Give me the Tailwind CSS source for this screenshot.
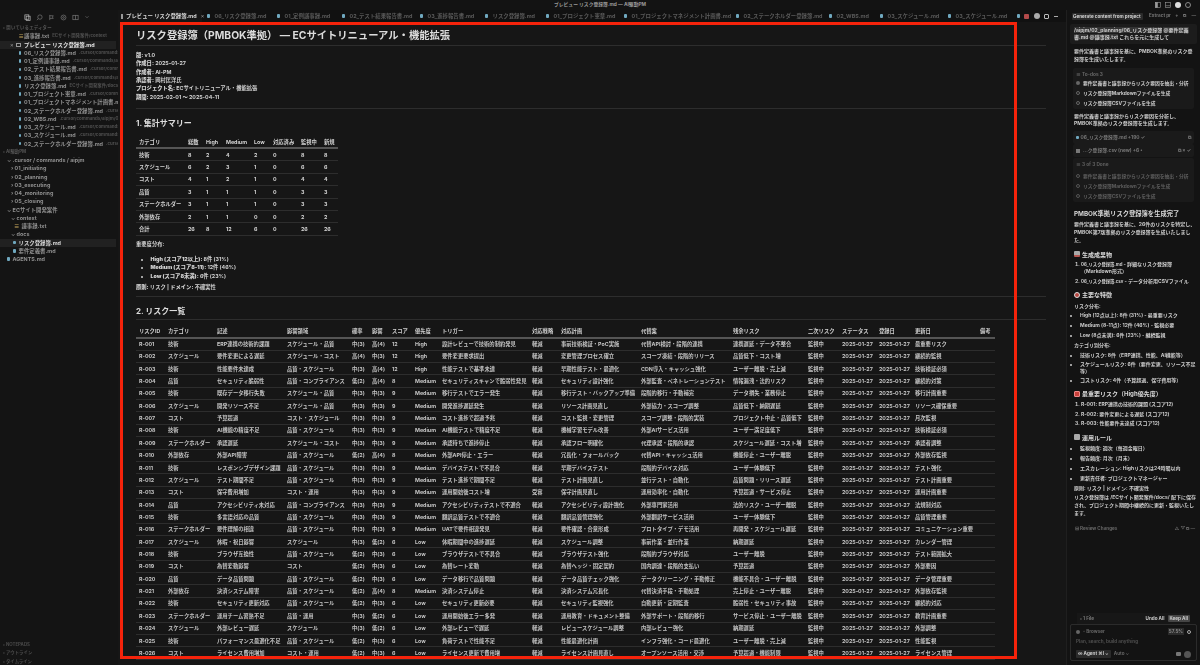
<!DOCTYPE html>
<html lang="ja"><head><meta charset="utf-8"><title>プレビュー リスク登録簿.md — AI駆動PM</title>
<script src="https://cdn.jsdelivr.net/npm/@tailwindcss/browser@4"></script></head>
<body class="m-0 bg-[#141414]">
<div class="relative w-[1200px] h-[665px] overflow-hidden bg-[#141414] text-[#d2d2d2] font-['Inter','Noto_Sans_CJK_JP',sans-serif] text-[5.3px] font-bold">
  <div class="blur-[0.25px]">
  <!-- title bar -->
  <div class="relative h-[10px] flex items-center justify-center text-[4.8px] text-[#9a9a9a] bg-[#131313]">プレビュー リスク登録簿.md — AI駆動PM
  </div>
  <div class="absolute right-[2px] top-[1px] flex items-center gap-[4px]">
    <svg width="6" height="6" viewBox="0 0 6 6" fill="none" stroke="#999" stroke-width=".6"><rect x=".5" y=".5" width="5" height="5"/><rect x=".5" y=".5" width="2" height="5" fill="#999"/></svg>
    <svg width="6" height="6" viewBox="0 0 6 6" fill="none" stroke="#999" stroke-width=".6"><rect x=".5" y=".5" width="5" height="5"/><path d="M.5 3.7h5"/></svg>
    <span class="w-[6px] h-[6px] rounded-full bg-[#ddd]"></span>
    <span class="w-[6px] h-[6px] rounded-full border border-[#888]"></span>
    <span class="w-[3px] h-[8px]"></span>
  </div>
  <div class="flex h-[655px]">
    <!-- sidebar -->
    <aside class="w-[118px] shrink-0 flex flex-col text-[5.4px] text-[#8f8f8f] leading-[8.25px] bg-[#141414] whitespace-nowrap">
      <div class="h-[14px] flex items-center gap-[5px] pl-[24px] text-[#888]">
        <svg width="7" height="7" viewBox="0 0 8 8" fill="none" stroke="#bbb" stroke-width=".8"><rect x="1" y="1" width="4.5" height="5"/><rect x="2.5" y="2.5" width="4.5" height="5"/></svg>
        <svg width="7" height="7" viewBox="0 0 8 8" fill="none" stroke="#777" stroke-width=".8"><circle cx="4.5" cy="3.5" r="2.5"/><path d="M2.7 5.3 1 7"/></svg>
        <svg width="7" height="7" viewBox="0 0 8 8" fill="none" stroke="#777" stroke-width=".8"><path d="M2 1v6M2 2h4l-1 1.5L6 5H2"/></svg>
        <svg width="7" height="7" viewBox="0 0 8 8" fill="none" stroke="#777" stroke-width=".8"><circle cx="4" cy="4" r="2.8"/><circle cx="4" cy="4" r="1"/></svg>
        <svg width="7" height="7" viewBox="0 0 8 8" fill="none" stroke="#777" stroke-width=".8"><rect x="1" y="1.5" width="6" height="5"/><path d="M4 1.5v5"/></svg>
        <svg width="6" height="6" viewBox="0 0 8 8" fill="none" stroke="#777" stroke-width=".8"><path d="m2 3 2 2 2-2"/></svg>
      </div>
      <div class="h-[8.25px] pl-[3px] text-[4.4px] text-[#555] tracking-[.2px]">› 開いているエディター</div>
      <div class="h-[8.25px] pl-[18.5px] flex items-center"><span class="text-[#c7a85c] w-[5.5px]">≡</span><span>議事録.txt</span><span class="text-[#505050] text-[4.4px] ml-[3px]">ECサイト開発案件/context</span></div>
      <div class="h-[8.25px] pl-[10px] mr-[2px] flex items-center bg-white/6 text-[#e4e4e4] font-bold"><span class="w-[6px] text-[#aaa] font-normal">×</span><span class="w-[5px] h-[4px] border border-[#999] mr-[3px]"></span><span>プレビュー リスク登録簿.md</span></div>
      <div class="h-[8.25px] pl-[18.5px] flex items-center"><span class="w-[2.5px] h-[3.5px] rounded-[1px] bg-[#6fa8bf] mr-[3px] shrink-0"></span><span>06_リスク登録簿.md</span><span class="text-[#505050] text-[4.4px] ml-[3px]">.cursor/commands/...</span></div>
      <div class="h-[8.25px] pl-[18.5px] flex items-center"><span class="w-[2.5px] h-[3.5px] rounded-[1px] bg-[#6fa8bf] mr-[3px] shrink-0"></span><span>01_定例議事録.md</span><span class="text-[#505050] text-[4.4px] ml-[3px]">.cursor/commands/aipjr...</span></div>
      <div class="h-[8.25px] pl-[18.5px] flex items-center"><span class="w-[2.5px] h-[3.5px] rounded-[1px] bg-[#6fa8bf] mr-[3px] shrink-0"></span><span>02_テスト結果報告書.md</span><span class="text-[#505050] text-[4.4px] ml-[3px]">.cursor/comm...</span></div>
      <div class="h-[8.25px] pl-[18.5px] flex items-center"><span class="w-[2.5px] h-[3.5px] rounded-[1px] bg-[#6fa8bf] mr-[3px] shrink-0"></span><span>03_進捗報告書.md</span><span class="text-[#505050] text-[4.4px] ml-[3px]">.cursor/commands/aipj...</span></div>
      <div class="h-[8.25px] pl-[18.5px] flex items-center"><span class="w-[2.5px] h-[3.5px] rounded-[1px] bg-[#6fa8bf] mr-[3px] shrink-0"></span><span>リスク登録簿.md</span><span class="text-[#505050] text-[4.4px] ml-[3px]">ECサイト開発案件/docs</span></div>
      <div class="h-[8.25px] pl-[18.5px] flex items-center"><span class="w-[2.5px] h-[3.5px] rounded-[1px] bg-[#6fa8bf] mr-[3px] shrink-0"></span><span>01_プロジェクト憲章.md</span><span class="text-[#505050] text-[4.4px] ml-[3px]">.cursor/comm...</span></div>
      <div class="h-[8.25px] pl-[18.5px] flex items-center"><span class="w-[2.5px] h-[3.5px] rounded-[1px] bg-[#6fa8bf] mr-[3px] shrink-0"></span><span>01_プロジェクトマネジメント計画書.m...</span></div>
      <div class="h-[8.25px] pl-[18.5px] flex items-center"><span class="w-[2.5px] h-[3.5px] rounded-[1px] bg-[#6fa8bf] mr-[3px] shrink-0"></span><span>02_ステークホルダー登録簿.md</span><span class="text-[#505050] text-[4.4px] ml-[3px]">.cursor...</span></div>
      <div class="h-[8.25px] pl-[18.5px] flex items-center"><span class="w-[2.5px] h-[3.5px] rounded-[1px] bg-[#6fa8bf] mr-[3px] shrink-0"></span><span>02_WBS.md</span><span class="text-[#505050] text-[4.4px] ml-[3px]">.cursor/commands/aipjm/02...</span></div>
      <div class="h-[8.25px] pl-[18.5px] flex items-center"><span class="w-[2.5px] h-[3.5px] rounded-[1px] bg-[#6fa8bf] mr-[3px] shrink-0"></span><span>03_スケジュール.md</span><span class="text-[#505050] text-[4.4px] ml-[3px]">.cursor/commands/...</span></div>
      <div class="h-[8.25px] pl-[18.5px] flex items-center"><span class="w-[2.5px] h-[3.5px] rounded-[1px] bg-[#6fa8bf] mr-[3px] shrink-0"></span><span>03_スケジュール.md</span><span class="text-[#505050] text-[4.4px] ml-[3px]">.cursor/commands/...</span></div>
      <div class="h-[8.25px] pl-[18.5px] flex items-center"><span class="w-[2.5px] h-[3.5px] rounded-[1px] bg-[#6fa8bf] mr-[3px] shrink-0"></span><span>02_ステークホルダー登録簿.md</span><span class="text-[#505050] text-[4.4px] ml-[3px]">.cursor...</span></div>
      <div class="h-[8.25px] pl-[3px] text-[4.4px] text-[#555]">› AI駆動PM</div>
      <div class="h-[8.25px] pl-[7px]">⌄ .cursor / commands / aipjm</div>
      <div class="h-[8.25px] pl-[11px]">› 01_initiating</div>
      <div class="h-[8.25px] pl-[11px]">› 02_planning</div>
      <div class="h-[8.25px] pl-[11px]">› 03_executing</div>
      <div class="h-[8.25px] pl-[11px]">› 04_monitoring</div>
      <div class="h-[8.25px] pl-[11px]">› 05_closing</div>
      <div class="h-[8.25px] pl-[7px]">⌄ ECサイト開発案件</div>
      <div class="h-[8.25px] pl-[11px]">⌄ context</div>
      <div class="h-[8.25px] pl-[14px] flex gap-[2px] items-center"><span class="text-[#c7a85c]">≡</span>議事録.txt</div>
      <div class="h-[8.25px] pl-[11px]">⌄ docs</div>
      <div class="h-[8.25px] pl-[13px] mr-[2px] flex gap-[3px] items-center bg-white/6 text-[#d6d6d6]"><span class="w-[2.5px] h-[3.5px] rounded-[1px] bg-[#6fa8bf]"></span>リスク登録簿.md</div>
      <div class="h-[8.25px] pl-[13px] flex gap-[3px] items-center"><span class="w-[2.5px] h-[3.5px] rounded-[1px] bg-[#6fa8bf]"></span>要件定義書.md</div>
      <div class="h-[8.25px] pl-[7px] flex gap-[3px] items-center"><span class="w-[2.5px] h-[3.5px] rounded-[1px] bg-[#6fa8bf]"></span>AGENTS.md</div>
      <div class="mt-auto -mb-[1px] text-[4.4px] text-[#4a4a4a]">
        <div class="h-[8.5px] pl-[3px]">› NOTEPADS</div>
        <div class="h-[8.5px] pl-[3px]">› アウトライン</div>
        <div class="h-[8.5px] pl-[3px]">› タイムライン</div>
      </div>
    </aside>
    <!-- center -->
    <main class="w-[948px] shrink-0 flex flex-col bg-[#161616] min-w-0">
      <div class="h-[12px] shrink-0 flex items-center bg-[#111] text-[5.4px] text-[#5a5a5a] whitespace-nowrap">
        <div class="w-[84px] h-full flex items-center pl-[2px] gap-[2px] bg-[#161616] text-[#d8d8d8] font-bold"><span class="w-[6px] h-[5px] border border-[#999] mx-[1px]"></span>プレビュー リスク登録簿.md<span class="ml-[2px] font-normal text-[#aaa]">×</span></div>
        <div class="w-[5px]"></div>
        <div class="w-[70px] flex items-center gap-[5px]"><span class="w-[2.5px] h-[3.5px] rounded-[1px] bg-[#6fa8bf]"></span>06_リスク登録簿.md</div>
        <div class="w-[65px] flex items-center gap-[5px]"><span class="w-[2.5px] h-[3.5px] rounded-[1px] bg-[#6fa8bf]"></span>01_定例議事録.md</div>
        <div class="w-[78px] flex items-center gap-[5px]"><span class="w-[2.5px] h-[3.5px] rounded-[1px] bg-[#6fa8bf]"></span>02_テスト結果報告書.md</div>
        <div class="w-[65px] flex items-center gap-[5px]"><span class="w-[2.5px] h-[3.5px] rounded-[1px] bg-[#6fa8bf]"></span>03_進捗報告書.md</div>
        <div class="w-[61px] flex items-center gap-[5px]"><span class="w-[2.5px] h-[3.5px] rounded-[1px] bg-[#6fa8bf]"></span>リスク登録簿.md</div>
        <div class="w-[78px] flex items-center gap-[5px]"><span class="w-[2.5px] h-[3.5px] rounded-[1px] bg-[#6fa8bf]"></span>01_プロジェクト憲章.md</div>
        <div class="w-[112px] flex items-center gap-[5px]"><span class="w-[2.5px] h-[3.5px] rounded-[1px] bg-[#6fa8bf]"></span>01_プロジェクトマネジメント計画書.md</div>
        <div class="w-[93px] flex items-center gap-[5px]"><span class="w-[2.5px] h-[3.5px] rounded-[1px] bg-[#6fa8bf]"></span>02_ステークホルダー登録簿.md</div>
        <div class="w-[51px] flex items-center gap-[5px]"><span class="w-[2.5px] h-[3.5px] rounded-[1px] bg-[#6fa8bf]"></span>02_WBS.md</div>
        <div class="w-[68px] flex items-center gap-[5px]"><span class="w-[2.5px] h-[3.5px] rounded-[1px] bg-[#6fa8bf]"></span>03_スケジュール.md</div>
        <div class="w-[69px] flex items-center gap-[5px]"><span class="w-[2.5px] h-[3.5px] rounded-[1px] bg-[#6fa8bf]"></span>03_スケジュール.md</div>
        <div class="flex items-center gap-[4.5px]">
          <span class="w-[2.5px] h-[3.5px] rounded-[1px] bg-[#6fa8bf]"></span>
          <span class="w-[5px] h-[5px] rounded-[1px] bg-[#b34a4a]"></span>
          <span class="w-[6px] h-[6px] rounded-full bg-[#aaa]"></span>
          <span class="w-[5px] h-[5px] border border-[#bbb] rounded-[1px]"></span>
          <span class="w-[4px] h-[1px] bg-[#aaa]"></span>
        </div>
      </div>
      <div class="flex-1 overflow-hidden pl-[18px] pr-[20px] whitespace-nowrap">
        <h1 class="h-[24px] pt-[5px] leading-[16px] text-[10.3px] font-bold text-[#dcdcdc] border-b border-white/10">リスク登録簿（PMBOK準拠） — ECサイトリニューアル・機能拡張</h1>
        <div class="mt-[5px] leading-[8.35px]">
          <p><b>版:</b> v1.0</p><p><b>作成日:</b> 2025-01-27</p><p><b>作成者:</b> AI-PM</p><p><b>承認者:</b> 岡村匡洋氏</p><p><b>プロジェクト名:</b> ECサイトリニューアル・機能拡張</p><p><b>期間:</b> 2025-02-01 〜 2025-04-11</p>
        </div>
        <div class="mt-[7px] border-t border-white/10"></div>
        <h2 class="mt-[8.5px] h-[10px] leading-[10px] text-[8px] font-bold text-[#dcdcdc]">1. 集計サマリー</h2>
        <table class="mt-[8.5px] w-[202px] table-fixed border-collapse [&_th]:h-[12.4px] [&_td]:h-[12.4px] [&_th]:p-0 [&_td]:p-0 [&_th]:pl-[3px] [&_td]:pl-[3px] [&_th]:text-left [&_th]:font-bold [&_th]:border-b-2 [&_th]:border-[#555] [&_td]:border-b [&_td]:border-white/10 [&_td]:leading-[8px] [&_th]:leading-[8px]">
          <colgroup><col class="w-[49px]"><col class="w-[18px]"><col class="w-[20px]"><col class="w-[28px]"><col class="w-[19px]"><col class="w-[28px]"><col class="w-[23px]"><col class="w-[17px]"></colgroup>
          <thead><tr><th>カテゴリ</th><th>総数</th><th>High</th><th>Medium</th><th>Low</th><th>対応済み</th><th>監視中</th><th>新規</th></tr></thead>
          <tbody>
          <tr><td class="font-bold">技術</td><td>8</td><td>2</td><td>4</td><td>2</td><td>0</td><td>8</td><td>8</td></tr>
          <tr><td class="font-bold">スケジュール</td><td>6</td><td>2</td><td>3</td><td>1</td><td>0</td><td>6</td><td>6</td></tr>
          <tr><td class="font-bold">コスト</td><td>4</td><td>1</td><td>2</td><td>1</td><td>0</td><td>4</td><td>4</td></tr>
          <tr><td class="font-bold">品質</td><td>3</td><td>1</td><td>1</td><td>1</td><td>0</td><td>3</td><td>3</td></tr>
          <tr><td class="font-bold">ステークホルダー</td><td>3</td><td>1</td><td>1</td><td>1</td><td>0</td><td>3</td><td>3</td></tr>
          <tr><td class="font-bold">外部依存</td><td>2</td><td>1</td><td>1</td><td>0</td><td>0</td><td>2</td><td>2</td></tr>
          <tr class="font-bold"><td>合計</td><td>26</td><td>8</td><td>12</td><td>6</td><td>0</td><td>26</td><td>26</td></tr>
          </tbody>
        </table>
        <p class="mt-[4.5px] leading-[8.35px] font-bold">重要度分布:</p>
        <ul class="mt-[6.5px] ml-[14.5px] leading-[8.35px] list-disc">
          <li><b>High (スコア12以上):</b> 8件 (31%)</li><li><b>Medium (スコア8-11):</b> 12件 (46%)</li><li><b>Low (スコア8未満):</b> 6件 (23%)</li>
        </ul>
        <p class="mt-[2.5px] leading-[8.35px]"><b>原則:</b> リスク | <b>ドメイン:</b> 不確実性</p>
        <div class="mt-[5.5px] border-t border-white/10"></div>
        <h2 class="mt-[9px] h-[10px] leading-[10px] text-[8px] font-bold text-[#dcdcdc] pb-[13px] border-b border-white/10">2. リスク一覧</h2>
        <table class="mt-[5px] w-[859px] table-fixed border-collapse text-[#c4c4c4] [&_th]:h-[12.36px] [&_td]:h-[12.36px] [&_th]:p-0 [&_td]:p-0 [&_th]:pl-[3px] [&_td]:pl-[3px] [&_th]:text-left [&_th]:font-bold [&_th]:text-[#d0d0d0] [&_th]:border-b-2 [&_th]:border-[#555] [&_td]:border-b [&_td]:border-white/10 [&_td]:leading-[8px] [&_th]:leading-[8px]">
          <colgroup><col class="w-[29px]"><col class="w-[49px]"><col class="w-[70px]"><col class="w-[65px]"><col class="w-[20px]"><col class="w-[20px]"><col class="w-[23px]"><col class="w-[27px]"><col class="w-[90px]"><col class="w-[29px]"><col class="w-[80px]"><col class="w-[92px]"><col class="w-[75px]"><col class="w-[34px]"><col class="w-[37px]"><col class="w-[36px]"><col class="w-[65px]"><col class="w-[18px]"></colgroup>
          <thead><tr><th>リスクID</th><th>カテゴリ</th><th>記述</th><th>影響領域</th><th>確率</th><th>影響</th><th>スコア</th><th>優先度</th><th>トリガー</th><th>対応戦略</th><th>対応計画</th><th>代替案</th><th>残余リスク</th><th>二次リスク</th><th>ステータス</th><th>登録日</th><th>更新日</th><th>備考</th></tr></thead>
          <tbody>
          <tr><td>R-001</td><td>技術</td><td>ERP連携の技術的課題</td><td>スケジュール・品質</td><td>中(3)</td><td>高(4)</td><td>12</td><td>High</td><td>設計レビューで技術的制約発見</td><td>軽減</td><td>事前技術検証・PoC実施</td><td>代替API検討・段階的連携</td><td>連携遅延・データ不整合</td><td>監視中</td><td>2025-01-27</td><td>2025-01-27</td><td>最重要リスク</td><td></td></tr>
          <tr><td>R-002</td><td>スケジュール</td><td>要件変更による遅延</td><td>スケジュール・コスト</td><td>高(4)</td><td>中(3)</td><td>12</td><td>High</td><td>要件変更要求提出</td><td>軽減</td><td>変更管理プロセス確立</td><td>スコープ凍結・段階的リリース</td><td>品質低下・コスト増</td><td>監視中</td><td>2025-01-27</td><td>2025-01-27</td><td>継続的監視</td><td></td></tr>
          <tr><td>R-003</td><td>技術</td><td>性能要件未達成</td><td>品質・スケジュール</td><td>中(3)</td><td>高(4)</td><td>12</td><td>High</td><td>性能テストで基準未達</td><td>軽減</td><td>早期性能テスト・最適化</td><td>CDN導入・キャッシュ強化</td><td>ユーザー離脱・売上減</td><td>監視中</td><td>2025-01-27</td><td>2025-01-27</td><td>技術検証必須</td><td></td></tr>
          <tr><td>R-004</td><td>品質</td><td>セキュリティ脆弱性</td><td>品質・コンプライアンス</td><td>低(2)</td><td>高(4)</td><td>8</td><td>Medium</td><td>セキュリティスキャンで脆弱性発見</td><td>軽減</td><td>セキュリティ設計強化</td><td>外部監査・ペネトレーションテスト</td><td>情報漏洩・法的リスク</td><td>監視中</td><td>2025-01-27</td><td>2025-01-27</td><td>継続的対策</td><td></td></tr>
          <tr><td>R-005</td><td>技術</td><td>既存データ移行失敗</td><td>スケジュール・品質</td><td>中(3)</td><td>中(3)</td><td>9</td><td>Medium</td><td>移行テストでエラー発生</td><td>軽減</td><td>移行テスト・バックアップ準備</td><td>段階的移行・手動補完</td><td>データ損失・業務停止</td><td>監視中</td><td>2025-01-27</td><td>2025-01-27</td><td>移行計画重要</td><td></td></tr>
          <tr><td>R-006</td><td>スケジュール</td><td>開発リソース不足</td><td>スケジュール・品質</td><td>中(3)</td><td>中(3)</td><td>9</td><td>Medium</td><td>開発進捗遅延発生</td><td>軽減</td><td>リソース計画見直し</td><td>外部協力・スコープ調整</td><td>品質低下・納期遅延</td><td>監視中</td><td>2025-01-27</td><td>2025-01-27</td><td>リソース確保重要</td><td></td></tr>
          <tr><td>R-007</td><td>コスト</td><td>予算超過</td><td>コスト・スケジュール</td><td>中(3)</td><td>中(3)</td><td>9</td><td>Medium</td><td>コスト進捗で超過予兆</td><td>軽減</td><td>コスト監視・変更管理</td><td>スコープ調整・段階的実装</td><td>プロジェクト中止・品質低下</td><td>監視中</td><td>2025-01-27</td><td>2025-01-27</td><td>月次監視</td><td></td></tr>
          <tr><td>R-008</td><td>技術</td><td>AI機能の精度不足</td><td>品質・スケジュール</td><td>中(3)</td><td>中(3)</td><td>9</td><td>Medium</td><td>AI機能テストで精度不足</td><td>軽減</td><td>機械学習モデル改善</td><td>外部AIサービス活用</td><td>ユーザー満足度低下</td><td>監視中</td><td>2025-01-27</td><td>2025-01-27</td><td>技術検証必須</td><td></td></tr>
          <tr><td>R-009</td><td>ステークホルダー</td><td>承認遅延</td><td>スケジュール・コスト</td><td>中(3)</td><td>中(3)</td><td>9</td><td>Medium</td><td>承認待ちで進捗停止</td><td>軽減</td><td>承認フロー明確化</td><td>代理承認・段階的承認</td><td>スケジュール遅延・コスト増</td><td>監視中</td><td>2025-01-27</td><td>2025-01-27</td><td>承認者調整</td><td></td></tr>
          <tr><td>R-010</td><td>外部依存</td><td>外部API障害</td><td>品質・スケジュール</td><td>低(2)</td><td>高(4)</td><td>8</td><td>Medium</td><td>外部API停止・エラー</td><td>軽減</td><td>冗長化・フォールバック</td><td>代替API・キャッシュ活用</td><td>機能停止・ユーザー離脱</td><td>監視中</td><td>2025-01-27</td><td>2025-01-27</td><td>外部依存監視</td><td></td></tr>
          <tr><td>R-011</td><td>技術</td><td>レスポンシブデザイン課題</td><td>品質・スケジュール</td><td>中(3)</td><td>中(3)</td><td>9</td><td>Medium</td><td>デバイステストで不具合</td><td>軽減</td><td>早期デバイステスト</td><td>段階的デバイス対応</td><td>ユーザー体験低下</td><td>監視中</td><td>2025-01-27</td><td>2025-01-27</td><td>テスト強化</td><td></td></tr>
          <tr><td>R-012</td><td>スケジュール</td><td>テスト期間不足</td><td>品質・スケジュール</td><td>中(3)</td><td>中(3)</td><td>9</td><td>Medium</td><td>テスト進捗で期間不足</td><td>軽減</td><td>テスト計画見直し</td><td>並行テスト・自動化</td><td>品質問題・リリース遅延</td><td>監視中</td><td>2025-01-27</td><td>2025-01-27</td><td>テスト計画重要</td><td></td></tr>
          <tr><td>R-013</td><td>コスト</td><td>保守費用増加</td><td>コスト・運用</td><td>中(3)</td><td>中(3)</td><td>9</td><td>Medium</td><td>運用開始後コスト増</td><td>受容</td><td>保守計画見直し</td><td>運用効率化・自動化</td><td>予算超過・サービス停止</td><td>監視中</td><td>2025-01-27</td><td>2025-01-27</td><td>運用計画重要</td><td></td></tr>
          <tr><td>R-014</td><td>品質</td><td>アクセシビリティ未対応</td><td>品質・コンプライアンス</td><td>中(3)</td><td>中(3)</td><td>9</td><td>Medium</td><td>アクセシビリティテストで不適合</td><td>軽減</td><td>アクセシビリティ設計強化</td><td>外部専門家活用</td><td>法的リスク・ユーザー離脱</td><td>監視中</td><td>2025-01-27</td><td>2025-01-27</td><td>法規制対応</td><td></td></tr>
          <tr><td>R-015</td><td>技術</td><td>多言語対応の品質</td><td>品質・スケジュール</td><td>中(3)</td><td>中(3)</td><td>9</td><td>Medium</td><td>翻訳品質テストで不適合</td><td>軽減</td><td>翻訳品質管理強化</td><td>外部翻訳サービス活用</td><td>ユーザー体験低下</td><td>監視中</td><td>2025-01-27</td><td>2025-01-27</td><td>品質管理重要</td><td></td></tr>
          <tr><td>R-016</td><td>ステークホルダー</td><td>要件理解の相違</td><td>品質・スケジュール</td><td>中(3)</td><td>中(3)</td><td>9</td><td>Medium</td><td>UATで要件相違発見</td><td>軽減</td><td>要件確認・合意形成</td><td>プロトタイプ・デモ活用</td><td>再開発・スケジュール遅延</td><td>監視中</td><td>2025-01-27</td><td>2025-01-27</td><td>コミュニケーション重要</td><td></td></tr>
          <tr><td>R-017</td><td>スケジュール</td><td>休暇・祝日影響</td><td>スケジュール</td><td>中(3)</td><td>低(2)</td><td>6</td><td>Low</td><td>休暇期間中の進捗遅延</td><td>軽減</td><td>スケジュール調整</td><td>事前作業・並行作業</td><td>納期遅延</td><td>監視中</td><td>2025-01-27</td><td>2025-01-27</td><td>カレンダー管理</td><td></td></tr>
          <tr><td>R-018</td><td>技術</td><td>ブラウザ互換性</td><td>品質・スケジュール</td><td>低(2)</td><td>中(3)</td><td>6</td><td>Low</td><td>ブラウザテストで不具合</td><td>軽減</td><td>ブラウザテスト強化</td><td>段階的ブラウザ対応</td><td>ユーザー離脱</td><td>監視中</td><td>2025-01-27</td><td>2025-01-27</td><td>テスト範囲拡大</td><td></td></tr>
          <tr><td>R-019</td><td>コスト</td><td>為替変動影響</td><td>コスト</td><td>低(2)</td><td>中(3)</td><td>6</td><td>Low</td><td>為替レート変動</td><td>軽減</td><td>為替ヘッジ・固定契約</td><td>国内調達・段階的支払い</td><td>予算超過</td><td>監視中</td><td>2025-01-27</td><td>2025-01-27</td><td>外部要因</td><td></td></tr>
          <tr><td>R-020</td><td>品質</td><td>データ品質問題</td><td>品質・スケジュール</td><td>低(2)</td><td>中(3)</td><td>6</td><td>Low</td><td>データ移行で品質問題</td><td>軽減</td><td>データ品質チェック強化</td><td>データクリーニング・手動修正</td><td>機能不具合・ユーザー離脱</td><td>監視中</td><td>2025-01-27</td><td>2025-01-27</td><td>データ管理重要</td><td></td></tr>
          <tr><td>R-021</td><td>外部依存</td><td>決済システム障害</td><td>品質・スケジュール</td><td>低(2)</td><td>高(4)</td><td>8</td><td>Medium</td><td>決済システム停止</td><td>軽減</td><td>決済システム冗長化</td><td>代替決済手段・手動処理</td><td>売上停止・ユーザー離脱</td><td>監視中</td><td>2025-01-27</td><td>2025-01-27</td><td>外部依存監視</td><td></td></tr>
          <tr><td>R-022</td><td>技術</td><td>セキュリティ更新対応</td><td>品質・スケジュール</td><td>低(2)</td><td>中(3)</td><td>6</td><td>Low</td><td>セキュリティ更新必要</td><td>軽減</td><td>セキュリティ監視強化</td><td>自動更新・定期監査</td><td>脆弱性・セキュリティ事故</td><td>監視中</td><td>2025-01-27</td><td>2025-01-27</td><td>継続的対応</td><td></td></tr>
          <tr><td>R-023</td><td>ステークホルダー</td><td>運用チーム習熟不足</td><td>品質・運用</td><td>中(3)</td><td>低(2)</td><td>6</td><td>Low</td><td>運用開始後エラー多発</td><td>軽減</td><td>運用教育・ドキュメント整備</td><td>外部サポート・段階的移行</td><td>サービス停止・ユーザー離脱</td><td>監視中</td><td>2025-01-27</td><td>2025-01-27</td><td>教育計画重要</td><td></td></tr>
          <tr><td>R-024</td><td>スケジュール</td><td>外部レビュー遅延</td><td>スケジュール</td><td>中(3)</td><td>低(2)</td><td>6</td><td>Low</td><td>外部レビューで遅延</td><td>軽減</td><td>レビュースケジュール調整</td><td>内部レビュー強化</td><td>納期遅延</td><td>監視中</td><td>2025-01-27</td><td>2025-01-27</td><td>外部調整</td><td></td></tr>
          <tr><td>R-025</td><td>技術</td><td>パフォーマンス最適化不足</td><td>品質・スケジュール</td><td>低(2)</td><td>中(3)</td><td>6</td><td>Low</td><td>負荷テストで性能不足</td><td>軽減</td><td>性能最適化計画</td><td>インフラ強化・コード最適化</td><td>ユーザー離脱・売上減</td><td>監視中</td><td>2025-01-27</td><td>2025-01-27</td><td>性能監視</td><td></td></tr>
          <tr><td>R-026</td><td>コスト</td><td>ライセンス費用増加</td><td>コスト・運用</td><td>低(2)</td><td>中(3)</td><td>6</td><td>Low</td><td>ライセンス更新で費用増</td><td>軽減</td><td>ライセンス計画見直し</td><td>オープンソース活用・交渉</td><td>予算超過・機能制限</td><td>監視中</td><td>2025-01-27</td><td>2025-01-27</td><td>ライセンス管理</td><td></td></tr>
          </tbody>
        </table>
      </div>
    </main>
    <!-- right panel -->
    <aside class="w-[134px] shrink-0 flex flex-col bg-[#131313] text-[5px] leading-[7.8px] text-[#cccccc] border-l border-white/5 min-w-0">
      <div class="h-[12px] shrink-0 flex items-center pl-[5px] pr-[4px] text-[4.6px] text-[#777] whitespace-nowrap">
        <span class="w-[71px] bg-white/10 rounded-[1px] text-[#d6d6d6] font-bold px-[1px] leading-[7px] overflow-hidden">Generate content from project</span>
        <span class="ml-[6px]">Extract pr</span>
        <span class="ml-auto flex gap-[5px] text-[#777]"><span>+</span><span>⧉</span><span>—</span></span>
      </div>
      <div class="mx-[3px] mt-[2px] h-[20px] rounded-[2px] bg-white/4 pl-[4px] pr-[8px] py-[2.5px] leading-[7.4px]"><span class="bg-white/10">/aipjm/02_planning/06_リスク登録簿</span> <span class="bg-white/10">@要件定義書.md</span> <span class="bg-white/10">@議事録.txt</span> これらを元に生成して</div>
      <p class="mt-[4px] ml-[7px] mr-[4px]">要件定義書と議事録を基に、PMBOK準拠のリスク登録簿を生成いたします。</p>
      <div class="mx-[6px] mt-[4px] h-[41px] rounded-[2px] bg-white/3 px-[3px] pt-[2px] leading-[10px] whitespace-nowrap text-[4.8px]">
        <div class="text-[#666] leading-[8px]">≡ To-dos 3</div>
        <div class="flex items-center gap-[3px]"><span class="w-[4px] h-[4px] rounded-full bg-[#666]"></span>要件定義書と議事録からリスク要因を抽出・分析</div>
        <div class="flex items-center gap-[3px]"><span class="w-[4px] h-[4px] rounded-full border border-[#666]"></span>リスク登録簿Markdownファイルを生成</div>
        <div class="flex items-center gap-[3px]"><span class="w-[4px] h-[4px] rounded-full border border-[#666]"></span>リスク登録簿CSVファイルを生成</div>
      </div>
      <p class="mt-[4px] ml-[7px] mr-[4px]">要件定義書と議事録からリスク要因を分析し、PMBOK準拠のリスク登録簿を生成します。</p>
      <div class="mx-[6px] mt-[3px] h-[13px] rounded-[2px] bg-white/3 flex items-center px-[3px] gap-[2px] text-[4.8px] text-[#777] whitespace-nowrap"><span class="w-[2.5px] h-[3.5px] rounded-[1px] bg-[#6fa8bf]"></span>06_リスク登録簿.md +190 ✓<span class="ml-auto">⧉</span></div>
      <div class="mx-[6px] h-[13px] rounded-[2px] bg-white/3 flex items-center px-[3px] gap-[3px] text-[4.8px] text-[#777] whitespace-nowrap"><span class="w-[4px] h-[4px] bg-[#777]"></span>...ク登録簿.csv (new) +6 •<span class="ml-auto">⧉ × ✓</span></div>
      <div class="mx-[6px] mt-[1px] h-[44px] rounded-[2px] bg-white/3 px-[3px] pt-[1.5px] text-[4.8px] text-[#5e5e5e] leading-[10px] whitespace-nowrap">
        <div class="leading-[8px] mb-[1px]">≡ 3 of 3 Done</div>
        <div class="mt-[3px] flex items-center gap-[3px]"><span class="w-[4px] h-[4px] rounded-full border border-[#555]"></span>要件定義書と議事録からリスク要因を抽出・分析</div>
        <div class="flex items-center gap-[3px]"><span class="w-[4px] h-[4px] rounded-full border border-[#555]"></span>リスク登録簿Markdownファイルを生成</div>
        <div class="flex items-center gap-[3px]"><span class="w-[4px] h-[4px] rounded-full border border-[#555]"></span>リスク登録簿CSVファイルを生成</div>
      </div>
      <div class="ml-[7px] mr-[4px]">
        <h3 class="mt-[8px] text-[6.3px] leading-[9px] font-bold text-[#d8d8d8] whitespace-nowrap">PMBOK準拠リスク登録簿を生成完了</h3>
        <p class="mt-[2px]">要件定義書と議事録を基に、26件のリスクを特定し、PMBOK第7版準拠のリスク登録簿を生成いたしました。</p>
        <h4 class="mt-[5px] h-[9px] text-[6px] leading-[9px] font-bold text-[#d8d8d8] flex items-center gap-[2px]"><span class="w-[6px] h-[6px] bg-[#a9a9a9] border-b-[2px] border-[#b5554f] rounded-[1px]"></span>生成成果物</h4>
        <ol class="mt-[2px] ml-[7px] list-decimal">
          <li class="leading-[7.2px] mb-[2.6px]"><span class="text-[4.3px]">06_リスク登録簿.md</span> - 詳細なリスク登録簿（Markdown形式）</li>
          <li class="leading-[7.2px] whitespace-nowrap"><span class="text-[4.3px]">06_リスク登録簿.csv</span> - データ分析用CSVファイル</li>
        </ol>
        <h4 class="mt-[5.5px] h-[9px] text-[6px] leading-[9px] font-bold text-[#d8d8d8] flex items-center gap-[2px]"><span class="w-[6px] h-[6px] bg-[#b5453f] rounded-full border border-[#ddd]"></span>主要な特徴</h4>
        <p class="mt-[3.5px]">リスク分布:</p>
        <ul class="ml-[6px] list-disc leading-[9.8px] mt-[.5px]"><li>High (12点以上): 8件 (31%) - 最重要リスク</li><li>Medium (8-11点): 12件 (46%) - 監視必要</li><li>Low (8点未満): 6件 (23%) - 継続監視</li></ul>
        <p class="mt-[2px]">カテゴリ別分布:</p>
        <ul class="ml-[6px] list-disc mt-[1.5px] leading-[7px] [&_li]:mb-[2.2px]"><li class="whitespace-nowrap">技術リスク: 8件（ERP連携、性能、AI機能等）</li><li>スケジュールリスク: 6件（要件変更、リソース不足等）</li><li class="whitespace-nowrap">コストリスク: 4件（予算超過、保守費用等）</li></ul>
        <h4 class="mt-[5px] h-[9px] text-[6px] leading-[9px] font-bold text-[#d8d8d8] flex items-center gap-[2px]"><span class="w-[6px] h-[6px] bg-[#c9403a] rounded-[1px] border border-[#e88]"></span>最重要リスク（High優先度）</h4>
        <ol class="mt-[2px] ml-[7px] list-decimal leading-[9.6px]"><li>R-001: ERP連携の技術的課題 (スコア12)</li><li>R-002: 要件変更による遅延 (スコア12)</li><li>R-003: 性能要件未達成 (スコア12)</li></ol>
        <h4 class="mt-[4px] h-[9px] text-[6px] leading-[9px] font-bold text-[#d8d8d8] flex items-center gap-[2px]"><span class="w-[6px] h-[6px] bg-[#a9a9a9] rounded-[1px]"></span>運用ルール</h4>
        <ul class="ml-[6px] list-disc mt-[1.5px] leading-[10px]"><li>監視頻度: 週次（毎週金曜日）</li><li>報告頻度: 月次（月末）</li><li>エスカレーション: Highリスクは24時間以内</li><li>更新責任者: プロジェクトマネージャー</li></ul>
        <p class="mt-[2px]">原則: リスク | ドメイン: 不確実性</p>
        <p class="mt-[1px]">リスク登録簿は /ECサイト開発案件/docs/ 配下に保存され、プロジェクト期間中継続的に更新・監視いたします。</p>
      </div>
      <div class="mt-[7px] ml-[8px] mr-[5px] flex items-center text-[#666] text-[4.6px]"><span>⊟ Review Changes</span><span class="ml-auto">△ ▽ ⧉ —</span></div>
      <div class="mt-auto mx-[10px] h-[11px] flex items-center text-[4.6px] text-[#777] bg-white/2 pl-[3px]"><span>› 1 File</span><span class="ml-auto text-[#ccc] font-bold">Undo All</span><span class="ml-[3px] px-[2px] bg-white/20 text-[#ccc] font-bold rounded-[1px]">Keep All</span></div>
      <div class="mx-[3px] mb-[4px] h-[37px] rounded-[2px] border border-white/10 px-[5px] text-[4.6px] text-[#666] flex flex-col">
        <div class="h-[13px] flex items-center gap-[3px]"><span class="w-[4px] h-[4px] rounded-full bg-[#666]"></span><span>◦ Browser</span><span class="ml-auto bg-white/10 px-[1px] text-[#888]">57.5%</span><span class="w-[4px] h-[4px] rounded-full border border-[#aaa]"></span></div>
        <div class="text-[#4e4e4e] h-[8px] leading-[8px]">Plan, search, build anything</div>
        <div class="mt-auto mb-[2px] flex items-center gap-[3px]"><span class="bg-white/10 rounded-[1px] px-[2px] text-[#ccc] font-bold">∞ Agent ⌘I ⌄</span><span>Auto ⌄</span><span class="ml-auto w-[5px] h-[4px] bg-[#777] rounded-[1px]"></span><span class="w-[7px] h-[7px] rounded-full bg-[#555]"></span></div>
      </div>
    </aside>
  </div>
  </div>
  <!-- red annotation frame -->
  <div class="absolute left-[120px] top-[22px] w-[897px] h-[637px] border-[3.5px] border-[#f5230b] pointer-events-none"></div>
</div>
</body></html>
